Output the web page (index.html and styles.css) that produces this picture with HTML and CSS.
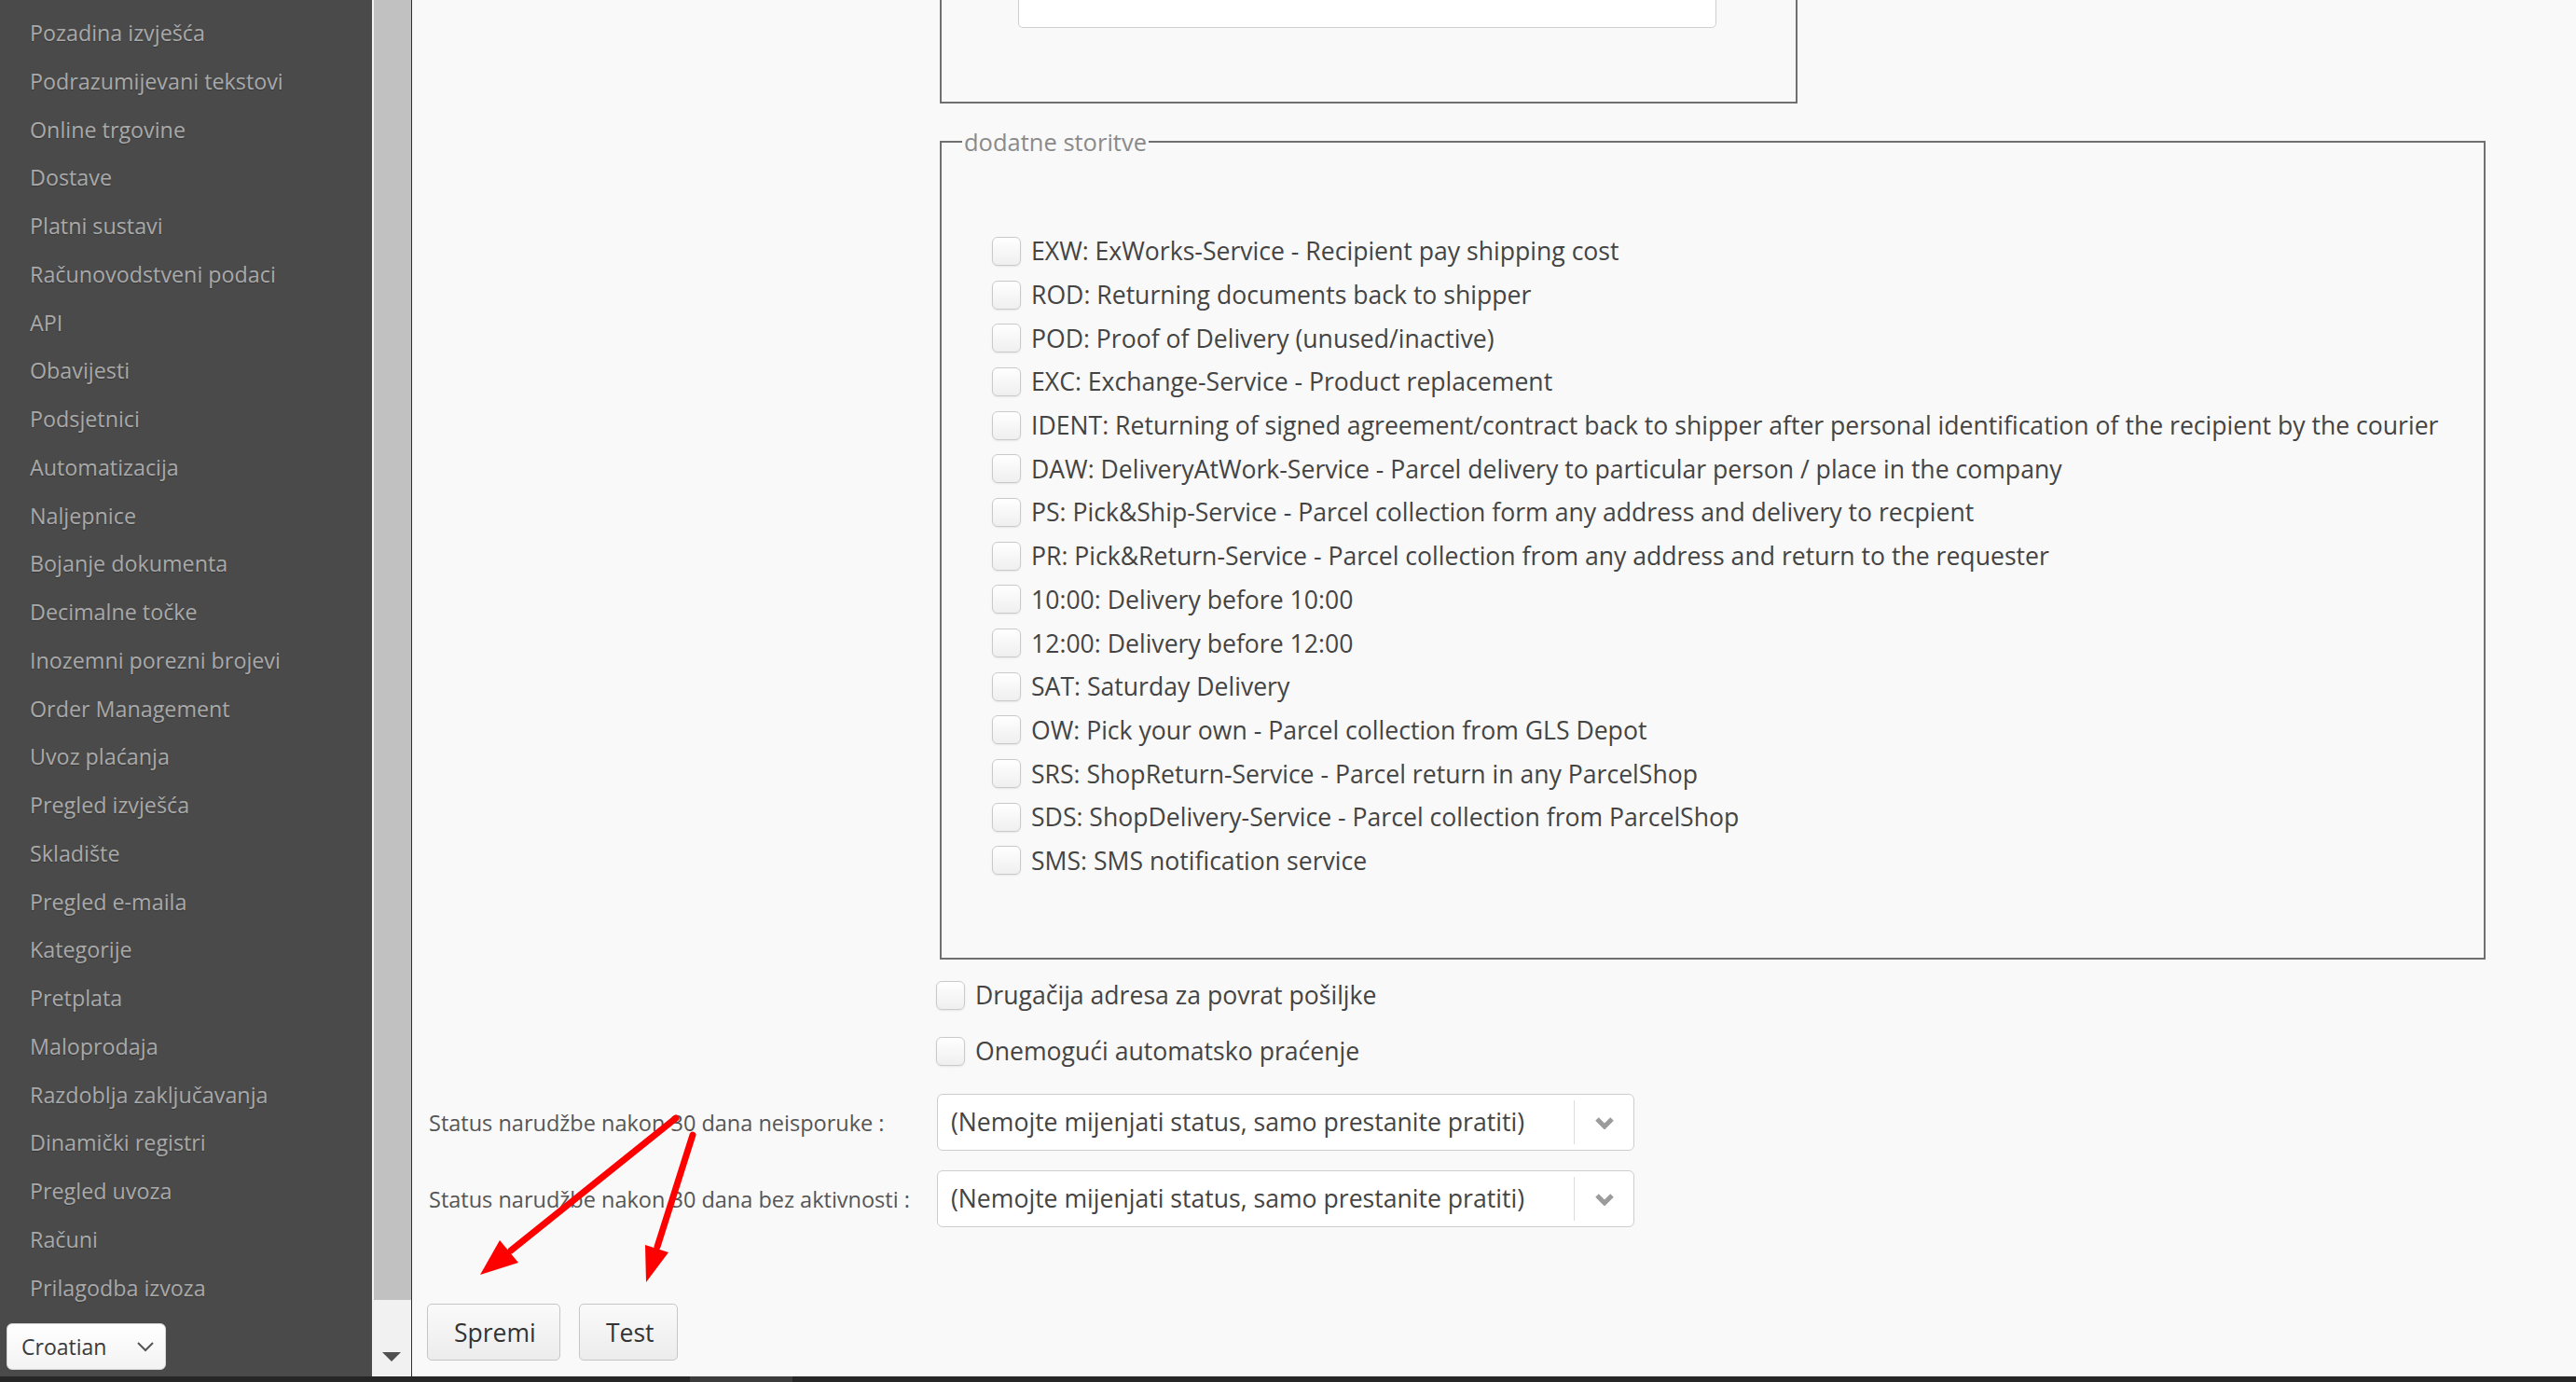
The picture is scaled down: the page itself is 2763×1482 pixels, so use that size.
FILE: index.html
```html
<!DOCTYPE html>
<html>
<head>
    <title>Postavke dostave</title>
    <meta name="viewport" content="width=device-width, initial-scale=1.0">
    <link rel="stylesheet" href="styles.css">
</head>
<body>
    <div class="app">
        <nav class="sidebar">
            <a class="nav-item">Pozadina izvješća</a>
            <a class="nav-item">Podrazumijevani tekstovi</a>
            <a class="nav-item">Online trgovine</a>
            <a class="nav-item">Dostave</a>
            <a class="nav-item">Platni sustavi</a>
            <a class="nav-item">Računovodstveni podaci</a>
            <a class="nav-item">API</a>
            <a class="nav-item">Obavijesti</a>
            <a class="nav-item">Podsjetnici</a>
            <a class="nav-item">Automatizacija</a>
            <a class="nav-item">Naljepnice</a>
            <a class="nav-item">Bojanje dokumenta</a>
            <a class="nav-item">Decimalne točke</a>
            <a class="nav-item">Inozemni porezni brojevi</a>
            <a class="nav-item">Order Management</a>
            <a class="nav-item">Uvoz plaćanja</a>
            <a class="nav-item">Pregled izvješća</a>
            <a class="nav-item">Skladište</a>
            <a class="nav-item">Pregled e-maila</a>
            <a class="nav-item">Kategorije</a>
            <a class="nav-item">Pretplata</a>
            <a class="nav-item">Maloprodaja</a>
            <a class="nav-item">Razdoblja zaključavanja</a>
            <a class="nav-item">Dinamički registri</a>
            <a class="nav-item">Pregled uvoza</a>
            <a class="nav-item">Računi</a>
            <a class="nav-item">Prilagodba izvoza</a>
            <div class="lang-select">
                <span>Croatian</span>
                <svg width="20" height="12" viewBox="0 0 20 12"><polyline points="2,2 10,10 18,2" fill="none" stroke="#555" stroke-width="2"/></svg>
            </div>
        </nav>

        <div class="scrollbar">
            <div class="scroll-thumb"></div>
            <div class="scroll-track">
                <span class="scroll-arrow"></span>
            </div>
        </div>

        <main class="content">
            <fieldset class="box box-top">
                <div class="text-input"></div>
            </fieldset>

            <fieldset class="box box-services">
                <legend>dodatne storitve</legend>
                <label class="service"><input type="checkbox"> EXW: ExWorks-Service - Recipient pay shipping cost</label>
                <label class="service"><input type="checkbox"> ROD: Returning documents back to shipper</label>
                <label class="service"><input type="checkbox"> POD: Proof of Delivery (unused/inactive)</label>
                <label class="service"><input type="checkbox"> EXC: Exchange-Service - Product replacement</label>
                <label class="service"><input type="checkbox"> IDENT: Returning of signed agreement/contract back to shipper after personal identification of the recipient by the courier</label>
                <label class="service"><input type="checkbox"> DAW: DeliveryAtWork-Service - Parcel delivery to particular person / place in the company</label>
                <label class="service"><input type="checkbox"> PS: Pick&amp;Ship-Service - Parcel collection form any address and delivery to recpient</label>
                <label class="service"><input type="checkbox"> PR: Pick&amp;Return-Service - Parcel collection from any address and return to the requester</label>
                <label class="service"><input type="checkbox"> 10:00: Delivery before 10:00</label>
                <label class="service"><input type="checkbox"> 12:00: Delivery before 12:00</label>
                <label class="service"><input type="checkbox"> SAT: Saturday Delivery</label>
                <label class="service"><input type="checkbox"> OW: Pick your own - Parcel collection from GLS Depot</label>
                <label class="service"><input type="checkbox"> SRS: ShopReturn-Service - Parcel return in any ParcelShop</label>
                <label class="service"><input type="checkbox"> SDS: ShopDelivery-Service - Parcel collection from ParcelShop</label>
                <label class="service"><input type="checkbox"> SMS: SMS notification service</label>
            </fieldset>

            <label class="check-row"><input type="checkbox"> Drugačija adresa za povrat pošiljke</label>
            <label class="check-row"><input type="checkbox"> Onemogući automatsko praćenje</label>

            <div class="status-row first">
                <span class="status-label">Status narudžbe nakon 30 dana neisporuke :</span>
                <div class="select">
                    <span class="select-value">(Nemojte mijenjati status, samo prestanite pratiti)</span>
                    <span class="select-arrow">
                        <svg width="22" height="14" viewBox="0 0 22 14"><polyline points="3,3 11,11 19,3" fill="none" stroke="#9b9b9b" stroke-width="5"/></svg>
                    </span>
                </div>
            </div>
            <div class="status-row">
                <span class="status-label">Status narudžbe nakon 30 dana bez aktivnosti :</span>
                <div class="select">
                    <span class="select-value">(Nemojte mijenjati status, samo prestanite pratiti)</span>
                    <span class="select-arrow">
                        <svg width="22" height="14" viewBox="0 0 22 14"><polyline points="3,3 11,11 19,3" fill="none" stroke="#9b9b9b" stroke-width="5"/></svg>
                    </span>
                </div>
            </div>

            <div class="actions">
                <button class="btn btn-save">Spremi</button>
                <button class="btn btn-test">Test</button>
            </div>
        </main>
    </div>
    <div class="taskbar"><span class="task-item"></span></div>

    <!-- annotation arrows drawn over the screenshot -->
    <svg class="annotations" width="2763" height="1482" viewBox="0 0 2763 1482">
        <line x1="725" y1="1199" x2="548" y2="1341" stroke="#ff0000" stroke-width="7" stroke-linecap="round"/>
        <polygon points="515,1367 536,1330 556,1354" fill="#ff0000"/>
        <line x1="743" y1="1217" x2="705" y2="1337" stroke="#ff0000" stroke-width="7" stroke-linecap="round"/>
        <polygon points="693,1375 692,1335 717,1343" fill="#ff0000"/>
    </svg>
</body>
</html>
```

FILE: styles.css
```css
/* General */
html, body {
    margin: 0;
    height: 1482px;
    overflow: hidden;
}
body {
    font-family: "Open Sans", "Liberation Sans", sans-serif;
    background: #f9f9f9;
    position: relative;
}
.app {
    display: flex;
    height: 1476px;
}

/* Sidebar */
.sidebar {
    width: 399px;
    background-color: #4a4a4a;
    padding-top: 10px;
    box-sizing: border-box;
    display: flex;
    flex-direction: column;
}
.nav-item {
    display: block;
    line-height: 51.75px;
    padding-left: 32px;
    font-size: 23.3px;
    color: #a9a9a9;
    text-shadow: 0 1px 1px rgba(0, 0, 0, 0.25);
    white-space: nowrap;
}
.lang-select {
    margin: 12px 0 0 7px;
    width: 171px;
    height: 50px;
    box-sizing: border-box;
    background: linear-gradient(to bottom, #ffffff, #f3f3f3);
    border: 1px solid #d6d6d6;
    border-radius: 6px;
    display: flex;
    align-items: center;
    justify-content: space-between;
    padding: 0 11px 0 15px;
    font-size: 23px;
    color: #3a3a3a;
}

/* Scrollbar strip */
.scrollbar {
    width: 42px;
    background: #f1f1f1;
    border-right: 1px solid #2f2f2f;
    display: flex;
    flex-direction: column;
}
.scroll-thumb {
    height: 1394px;
    margin-left: 2px;
    background: #c1c1c1;
}
.scroll-track {
    flex: 1;
    display: flex;
    align-items: flex-end;
    justify-content: center;
    padding-bottom: 16px;
}
.scroll-arrow {
    width: 0;
    height: 0;
    border-left: 10px solid transparent;
    border-right: 10px solid transparent;
    border-top: 10px solid #505050;
}

/* Content */
.content {
    flex: 1;
    background: #f9f9f9;
    padding-left: 16px;
    overflow: hidden;
    color: #444;
}
.box {
    border: 2px solid #707070;
    margin: 0 0 0 550px;
    box-sizing: border-box;
}
.box-top {
    width: 920px;
    margin-top: -60px;
    padding: 38px 85px 79px 82px;
}
.text-input {
    height: 50px;
    background: #fff;
    border: 1px solid #cfcfcf;
    border-radius: 5px;
    box-sizing: border-box;
}
.box-services {
    width: 1658px;
    margin-top: 25px;
    padding: 78px 20px 81px 54px;
}
.box-services legend {
    font-size: 25.5px;
    line-height: 32px;
    color: #8a8a8a;
    padding: 0 2px;
    margin-left: -32px;
}
.service {
    display: flex;
    align-items: center;
    height: 46.7px;
    font-size: 26.6px;
    white-space: nowrap;
}
input[type="checkbox"] {
    appearance: none;
    -webkit-appearance: none;
    width: 31px;
    height: 31px;
    margin: 0 11px 0 0;
    flex: none;
    border: 1px solid #cacaca;
    border-radius: 6px;
    background: linear-gradient(to bottom, #ffffff, #efefef);
    box-shadow: 0 1px 2px rgba(0, 0, 0, 0.08);
}
.check-row {
    display: flex;
    align-items: center;
    height: 60px;
    margin-left: 546px;
    font-size: 26.6px;
}
.box-services + .check-row {
    margin-top: 8px;
}

/* Status selects */
.status-row {
    display: grid;
    grid-template-columns: 547px 748px;
    align-items: center;
    margin-top: 21px;
}
.status-row.first {
    margin-top: 16px;
}
.status-label {
    padding-left: 2px;
    font-size: 23.5px;
    color: #555;
    white-space: nowrap;
}
.select {
    height: 61px;
    display: flex;
    background: #fff;
    border: 1px solid #cdcdcd;
    border-radius: 6px;
    box-sizing: border-box;
}
.select-value {
    flex: 1;
    padding-left: 14px;
    line-height: 59px;
    font-size: 26.6px;
    color: #444;
    white-space: nowrap;
}
.select-arrow {
    width: 63px;
    border-left: 1px solid #dcdcdc;
    margin: 6px 0;
    display: flex;
    align-items: center;
    justify-content: center;
}

/* Buttons */
.actions {
    display: flex;
    gap: 20px;
    margin-top: 82px;
}
.btn {
    height: 61px;
    padding: 0 28px;
    font-family: "Open Sans", "Liberation Sans", sans-serif;
    font-size: 26.5px;
    color: #333;
    background: linear-gradient(to bottom, #fafafa, #ececec);
    border: 1px solid #c6c6c6;
    border-radius: 5px;
}
.btn-save {
    width: 143px;
}
.btn-test {
    width: 106px;
}

/* Bottom strip */
.taskbar {
    height: 6px;
    background: #262626;
    position: relative;
}
.task-item {
    position: absolute;
    left: 740px;
    width: 110px;
    height: 6px;
    background: #3c3c3c;
}

/* Annotation overlay */
.annotations {
    position: absolute;
    top: 0;
    left: 0;
    pointer-events: none;
}
```
